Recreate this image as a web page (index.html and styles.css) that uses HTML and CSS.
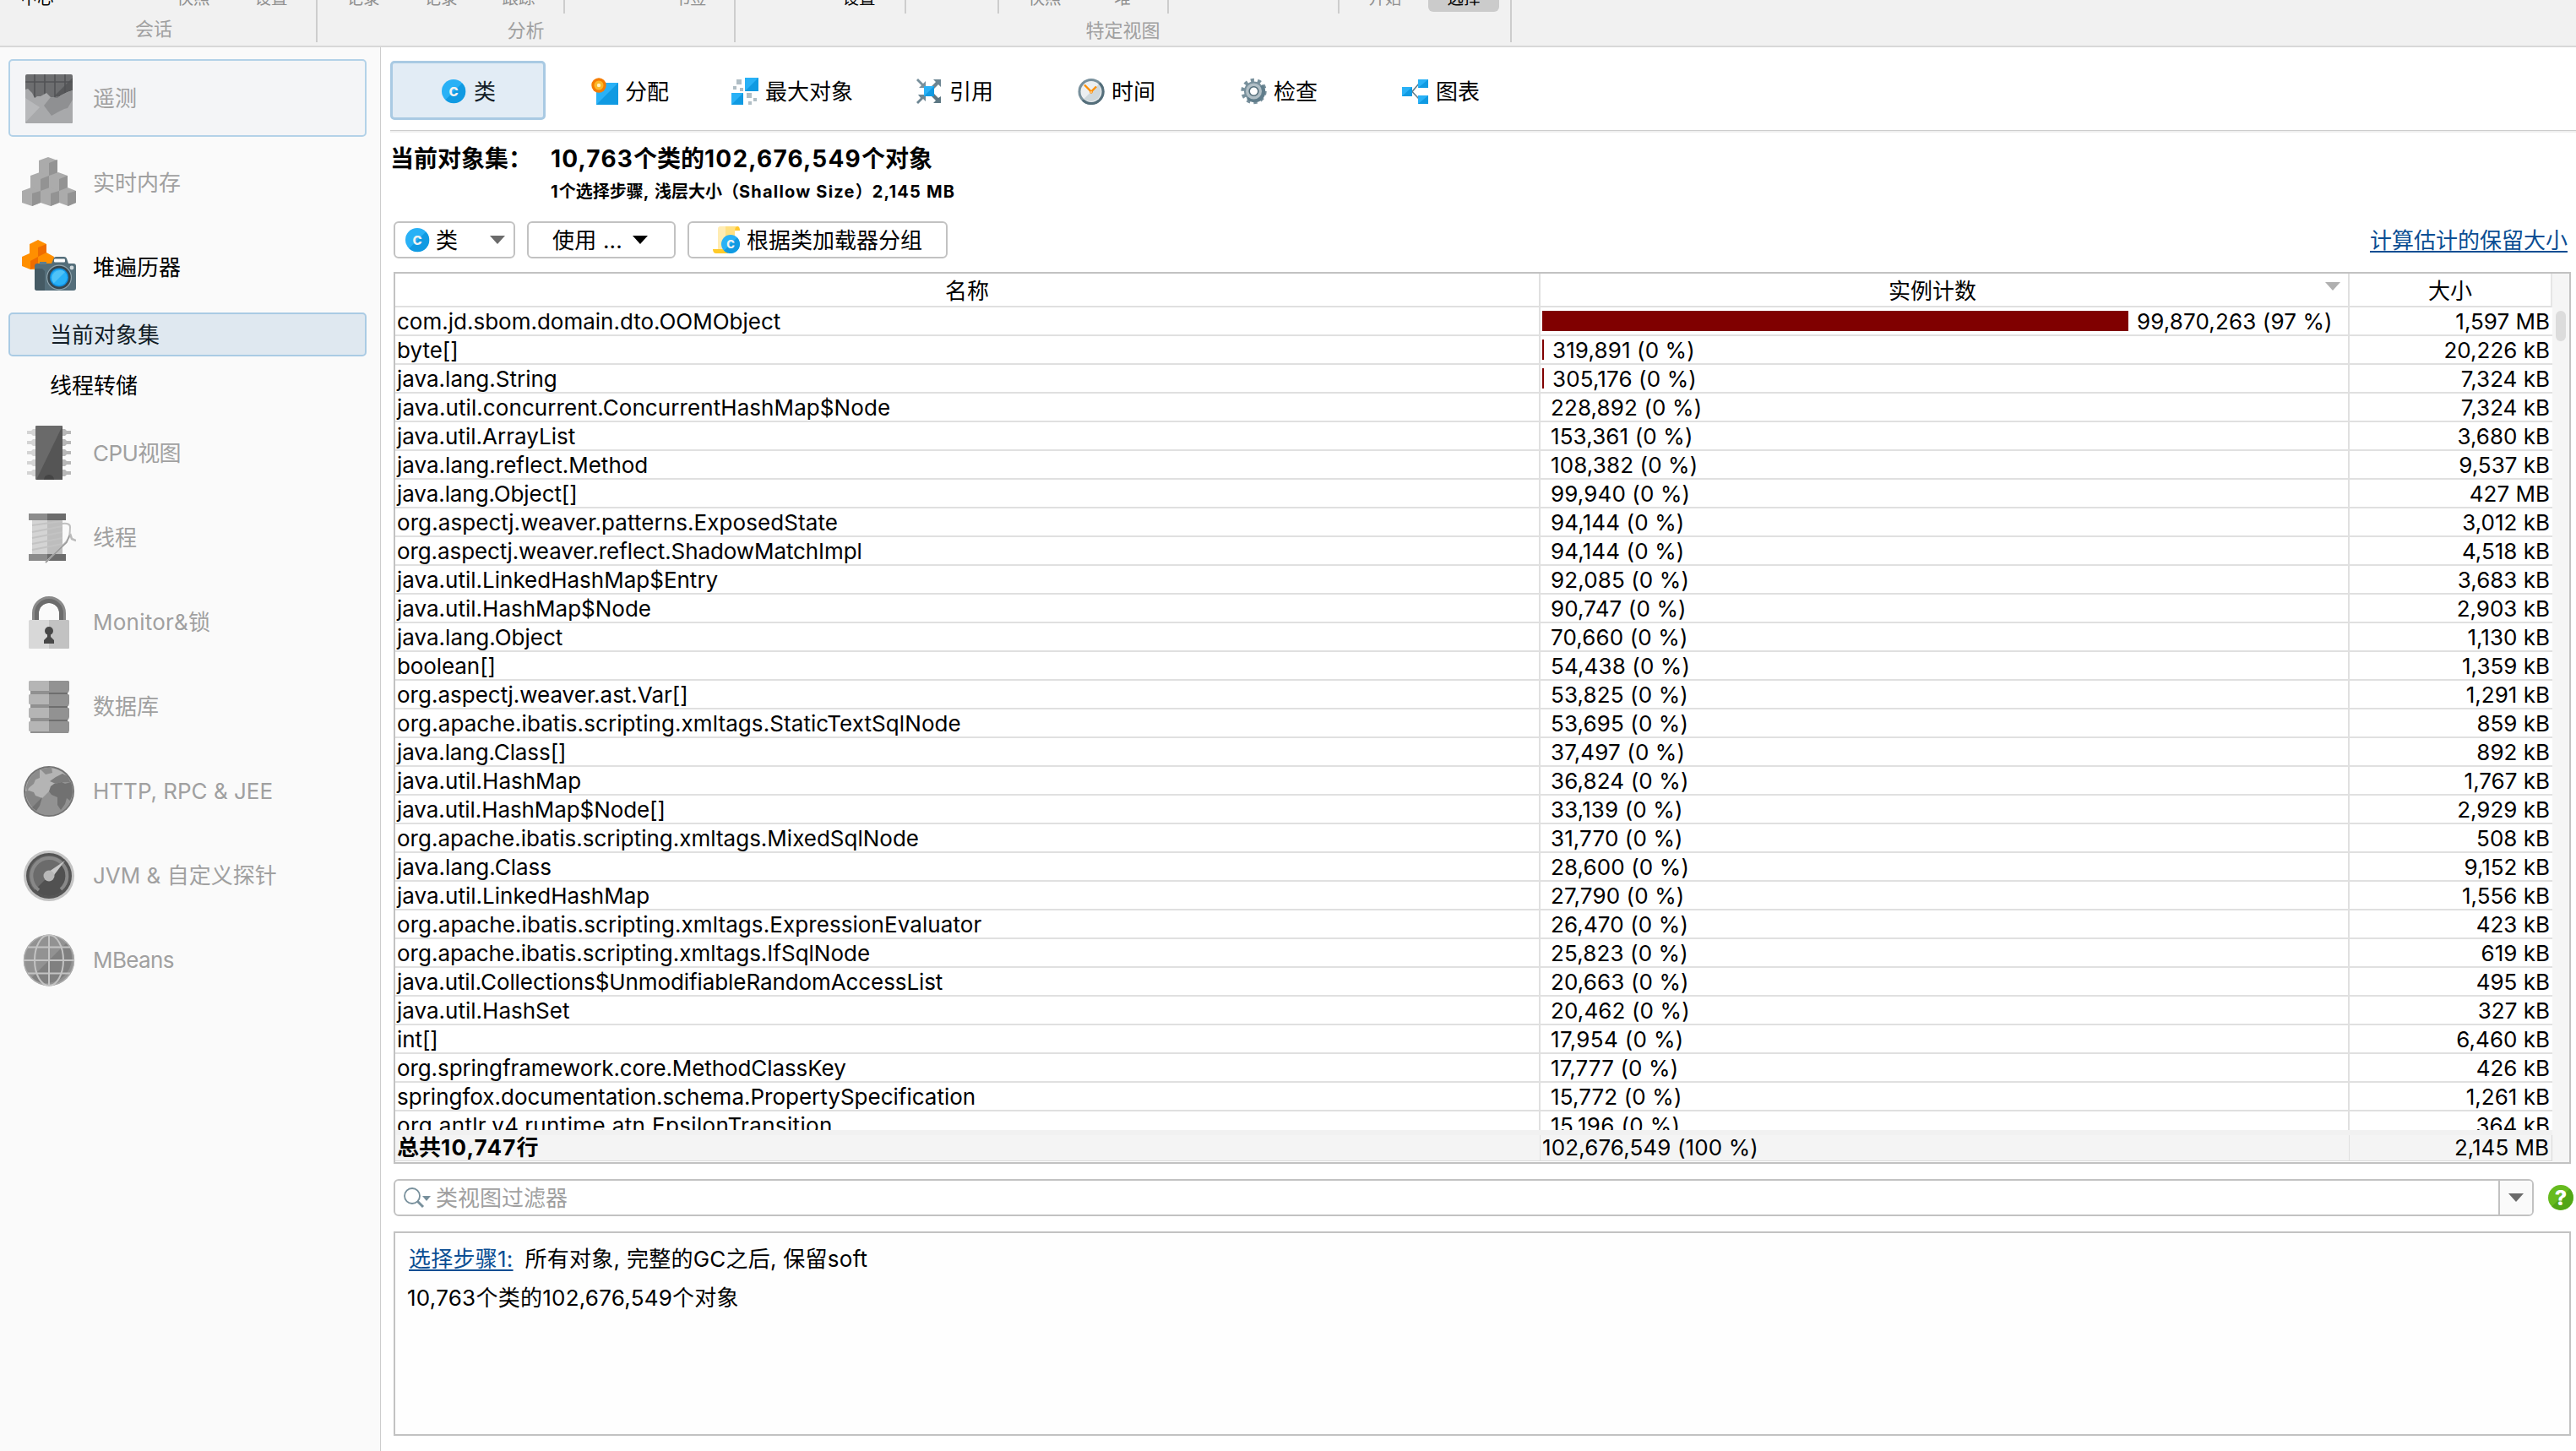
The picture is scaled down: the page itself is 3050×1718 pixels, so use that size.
FILE: index.html
```html
<!DOCTYPE html>
<html lang="zh-CN">
<head>
<meta charset="utf-8">
<title>堆遍历器</title>
<link rel="stylesheet" href="styles.css">
</head>
<body>
<svg class="defs" width="0" height="0" aria-hidden="true">
  <symbol id="i-class" viewBox="0 0 32 32">
    <circle cx="16" cy="16" r="14" fill="#29b1f6"/>
    <path d="M26.2 6.4A14 14 0 0 1 6.4 26.2Z" fill="#109ae2"/>
    <text x="16" y="21.500" text-anchor="middle" class="glyph-c">C</text>
  </symbol>
  <symbol id="i-down" viewBox="0 0 18 10"><path d="M0 0H18L9 10Z" fill="currentColor"/></symbol>
</svg>

<header class="ribbon">
  <section class="group g1">
    <div class="items">
      <span class="item on c-first">中心</span>
      <span class="item">快照</span><span class="item">设置</span>
    </div>
    <div class="caption">会话</div>
  </section>
  <section class="group g2">
    <div class="items">
      <span class="item">记录</span><span class="item">记录</span><span class="item">跟踪</span>
      <i class="sep"></i>
      <span class="item c-bookmark">书签</span>
    </div>
    <div class="caption">分析</div>
  </section>
  <section class="group g3">
    <div class="items">
      <span class="item on c-settings">设置</span>
      <i class="sep"></i><i class="sep c-wide"></i>
      <span class="item c-snap">快照</span><span class="item">堆</span>
      <i class="sep"></i><i class="sep c-wider"></i>
      <span class="item c-snap">开始</span>
      <span class="item on pressed">选择</span>
    </div>
    <div class="caption">特定视图</div>
  </section>
</header>

<div class="body">
<nav class="side">
  <a class="nav hover">
    <svg viewBox="0 0 64 64"><rect x="4" y="4" width="56" height="58" rx="2" fill="#6d6e70"/><path d="M60 8V30H38Z" fill="#57585a"/><path d="M15 4V32M27 4V32M39 4V32M51 4V32M4 13H60" stroke="#525355" stroke-width="1.6"/><path d="M4 22L7 21L12 26L15 32L18 30L22 30L29 26L34 31L42 32L46 29L54 25L60 23V60Q60 62 58 62H6Q4 62 4 60Z" fill="#a8a9ab"/><path d="M34 31L42 32L46 29L54 25L60 23V34L54 44L50 45L42 49L35 53L26 41Z" fill="#8f9092"/><path d="M4 32L21 43L4 61Z" fill="#b8b9bb"/></svg>
    <span>遥测</span></a>
  <a class="nav">
    <svg viewBox="0 0 64 64"><path d="M20 6L31 2L42 6V22L31 27L20 22Z" fill="#ababab"/><path d="M32 9L42 5V22L32 26Z" fill="#939393"/><path d="M10 24L21 20L32 24V42L21 46L10 42Z" fill="#ababab"/><path d="M22 28L32 24V42L22 46Z" fill="#939393"/><path d="M32 24L43 20L54 24V42L43 46L32 42Z" fill="#ababab"/><path d="M44 28L54 24V42L44 46Z" fill="#939393"/><path d="M0 42L11 38L22 42V56L12 60L0 56Z" fill="#ababab"/><path d="M12 45L22 42V56L12 60Z" fill="#939393"/><path d="M22 42L33 38L44 42V56L34 60L22 56Z" fill="#ababab"/><path d="M34 45L44 42V56L34 60Z" fill="#939393"/><path d="M44 42L54 38L64 42V56L55 60L44 56Z" fill="#ababab"/><path d="M54 45L64 42V56L54 60Z" fill="#939393"/></svg>
    <span>实时内存</span></a>
  <a class="nav on">
    <svg viewBox="0 0 64 64"><path d="M9 5L19 0L29 5V15L38 20V30L28 35L10 35L0 31V20L9 16Z" fill="#ff8f00"/><path d="M19 9L29 5V15L19 20ZM10 25L19 20V31L10 35Z" fill="#ef6c00"/><path d="M35 28L38 21Q39 20 41 20H50Q52 20 53 22L55 28Z" fill="#546e7a"/><rect x="38" y="22.500" width="13" height="4" rx="1" fill="#fff"/><rect x="15" y="28" width="49" height="32" rx="3" fill="#546e7a"/><path d="M15 34H24L27 37V60H18Q15 60 15 57Z" fill="#455a64"/><rect x="21" y="26" width="8" height="3" fill="#607d8b"/><circle cx="44" cy="44.500" r="15" fill="#90a4ae"/><circle cx="44" cy="44.500" r="13.800" fill="#37474f"/><circle cx="44" cy="44.500" r="11" fill="#0f8fe0"/><circle cx="44" cy="44.500" r="9.600" fill="#29b1f6"/><path d="M37.500 51.500A9.600 9.600 0 0 1 51 38Z" fill="#4fc3f7"/><circle cx="59" cy="33" r="2.400" fill="#cfd8dc"/></svg>
    <span>堆遍历器</span></a>
  <a class="sub sel">当前对象集</a>
  <a class="sub">线程转储</a>
  <a class="nav">
    <svg viewBox="0 0 64 64"><path d="M6 6H11L13 4H17V12H13L11 10H6ZM6 18H11L13 16H17V24H13L11 22H6ZM6 30H11L13 28H17V36H13L11 34H6ZM6 42H11L13 40H17V48H13L11 46H6ZM6 54H11L13 52H17V60H13L11 58H6Z" fill="#d4d4d4"/><path d="M58 6H53L51 4H47V12H51L53 10H58ZM58 18H53L51 16H47V24H51L53 22H58ZM58 30H53L51 28H47V36H51L53 34H58ZM58 42H53L51 40H47V48H51L53 46H58ZM58 54H53L51 52H47V60H51L53 58H58Z" fill="#b8b8b8"/><rect x="16" y="0" width="32" height="64" rx="1" fill="#6a6a6a"/><path d="M48 0V64H17Z" fill="#555"/><path d="M26 64A6 6 0 0 1 38 64Z" fill="#444"/></svg>
    <span class="tight">CPU视图</span></a>
  <a class="nav">
    <svg viewBox="0 0 64 64"><path d="M12 12H30V52H12Z" fill="#d4d4d4"/><path d="M30 12H48V52H30Z" fill="#bdbdbd"/><path d="M12 18L48 13M12 26L48 19M12 33L48 26M12 40L48 33M12 47L48 40" stroke="#c3c3c3" stroke-width="2"/><path d="M8 4H30V12H8ZM8 52H30V60H8Z" fill="#8c8c8c"/><path d="M30 4H52V12H30ZM30 52H52V60H30Z" fill="#6c6c6c"/><path d="M48 16Q57 15 57 20T56 32L52 38L28 62" fill="none" stroke="#c0c0c0" stroke-width="2"/><path d="M57 28L59 34L64 36" fill="none" stroke="#bbb" stroke-width="2.500"/><path d="M56 30L53 38L28 62" fill="none" stroke="#999" stroke-width="1.500"/></svg>
    <span>线程</span></a>
  <a class="nav">
    <svg viewBox="0 0 64 64"><path d="M16 32V22A16 16 0 0 1 48 22V32" fill="none" stroke="#8a8a8a" stroke-width="8"/><path d="M17.500 32V22A14.500 14.500 0 0 1 46.500 22V32" fill="none" stroke="#6c6c6c" stroke-width="5"/><rect x="8" y="30" width="48" height="34" rx="1.500" fill="#d8d8d8"/><path d="M32 30H54.500Q56 30 56 31.500V62.500Q56 64 54.500 64H32Z" fill="#c2c2c2"/><circle cx="32" cy="43" r="5" fill="#484848"/><path d="M30 44H34V50L38 54V58H26V54L30 50Z" fill="#484848"/></svg>
    <span class="wide">Monitor&amp;锁</span></a>
  <a class="nav">
    <svg viewBox="0 0 64 64"><path d="M10 4H32V62H10Z" fill="#8f8f8f"/><path d="M32 4H54V62H32Z" fill="#6e6e6e"/><path d="M9 2H32V14H9L8 13V3ZM9 18H32V30H9L8 29V19ZM9 34H32V46H9L8 45V35ZM9 50H32V62H9L8 61V51Z" fill="#b5b5b5"/><path d="M32 2H55L56 3V13L55 16H32ZM32 18H55L56 19V29L55 32H32ZM32 34H55L56 35V45L55 48H32ZM32 50H55L56 51V61L55 64H32Z" fill="#929292"/><path d="M10 14H32V18H10ZM10 30H32V34H10ZM10 46H32V50H10ZM10 62H54V64H10Z" fill="#909090"/><path d="M32 16H54V18H32ZM32 32H54V34H32ZM32 48H54V50H32Z" fill="#6e6e6e"/></svg>
    <span>数据库</span></a>
  <a class="nav">
    <svg viewBox="0 0 64 64"><circle cx="32" cy="33" r="30" fill="#747474"/><circle cx="32" cy="33" r="28" fill="#b4b4b4"/><path d="M52 13A28 28 0 0 1 12 53Z" fill="#929292"/><path d="M5 28Q9 12 21 7V17L16 19L14 24L8 29L6 35Z" fill="#8c8c8c"/><path d="M4 33L8 32L14 34L16 38L24 41L21 46L14 54Q5 45 4 33Z" fill="#858585"/><path d="M24 40L12 52L17 56L21 50Z" fill="#717171"/><path d="M34 27L38 24L47 22L51 24L58 22Q62 35 57 44L53 41L51 48L46 55L42 49V40L35 37L32 33Z" fill="#717171"/><path d="M33 21L40 16L48 12L54 15L57 22L47 22L40 24Z" fill="#7c7c7c"/><path d="M22 7L35 4L36 11L28 13Z" fill="#8c8c8c"/></svg>
    <span>HTTP, RPC &amp; JEE</span></a>
  <a class="nav">
    <svg viewBox="0 0 64 64"><circle cx="32" cy="33" r="30" fill="#c4c4c4"/><circle cx="32" cy="33" r="27" fill="#555"/><circle cx="32" cy="33" r="24" fill="#6b6b6b"/><path d="M49 16A24 24 0 0 1 15 50Z" fill="#515151"/><path d="M20 50A21 21 0 1 1 46 49" fill="none" stroke="#888" stroke-width="4"/><path d="M35 36L29 30L51 15Z" fill="#c8c8c8"/><circle cx="32" cy="33" r="6.500" fill="#b8b8b8"/></svg>
    <span>JVM &amp; 自定义探针</span></a>
  <a class="nav">
    <svg viewBox="0 0 64 64"><circle cx="32" cy="33" r="30" fill="#929292"/><path d="M53 12A30 30 0 0 1 11 54Z" fill="#808080"/><g fill="none" stroke="#c3c3c3" stroke-width="2"><circle cx="32" cy="33" r="29.500" stroke="#aaa" stroke-width="1.500"/><path d="M2 33H62M32 3V63M7 17.500H57M7 48.500H57"/><ellipse cx="32" cy="33" rx="17" ry="30"/></g></svg>
    <span class="tight">MBeans</span></a>
</nav>

<main class="main">
  <div class="tabs">
    <a class="tab active"><svg viewBox="0 0 32 32"><use href="#i-class"/></svg><span>类</span></a>
    <a class="tab"><svg viewBox="0 0 32 32"><path d="M6 6H32V32H6Z" fill="#29b1f6"/><path d="M32 6V32H6Z" fill="#109ae2"/><circle cx="9" cy="9" r="8.700" fill="#f57c00"/><circle cx="9" cy="9" r="5.500" fill="#fbb829"/><circle cx="9" cy="9" r="2.200" fill="#fff3c4"/></svg><span>分配</span></a>
    <a class="tab"><svg viewBox="0 0 32 32"><path d="M16 0H32V16H16ZM0 18H14V32H0Z" fill="#29b1f6"/><path d="M32 0V16H16ZM14 18V32H0Z" fill="#109ae2"/><path d="M6 2H12V8H6ZM2 10H6V14H2ZM10 12H14V16H10ZM18 18H24V24H18ZM26 24H30V28H26ZM20 28H24V32H20Z" fill="#b0bec5"/></svg><span>最大对象</span></a>
    <a class="tab"><svg viewBox="0 0 32 32"><path d="M1 3L3 1L9 7L12 4V12H4L7 9Z" fill="#78909c"/><path d="M21 2H30V11L27 8L22 13L19 10L24 5Z" fill="#6c8592"/><path d="M3 31L1 29L6 24L3 20H12V28L9 25Z" fill="#6c8592"/><path d="M30 22V30H21L24 27L19 22L22 19L27 24Z" fill="#5c7783"/><path d="M10 10H22V22H10Z" fill="#29b1f6"/><path d="M22 10V22H10Z" fill="#109ae2"/></svg><span>引用</span></a>
    <a class="tab"><svg viewBox="0 0 32 32"><circle cx="16" cy="16.500" r="15.500" fill="#78909c"/><path d="M27 5.500A15.500 15.500 0 0 1 5 27.500Z" fill="#546e7a"/><circle cx="16" cy="16.500" r="12.500" fill="#eceff1"/><path d="M24.800 7.700A12.500 12.500 0 0 1 7.200 25.300Z" fill="#cfd8dc"/><path d="M8 8.500L16 16.500L22 10.500" fill="none" stroke="#ff8f00" stroke-width="2.400"/><circle cx="16" cy="17" r="1.800" fill="#ff8f00"/><circle cx="16" cy="17" r=".8" fill="#fff"/></svg><span>时间</span></a>
    <a class="tab"><svg viewBox="0 0 32 32"><circle cx="16.500" cy="16" r="12.700" fill="none" stroke="#78909c" stroke-width="5" stroke-dasharray="4 3.980"/><circle cx="16.500" cy="16" r="11.500" fill="#78909c"/><path d="M27 8A12 12 0 0 1 8 25Z" fill="#607d8b"/><circle cx="16.500" cy="16" r="7.500" fill="none" stroke="#b0bec5" stroke-width="4"/><circle cx="16.500" cy="16" r="5.300" fill="#fff" stroke="#546e7a" stroke-width="1.600"/></svg><span>检查</span></a>
    <a class="tab"><svg viewBox="0 0 32 32"><path d="M20 7L12 16.500L20 25" fill="none" stroke="#607d8b" stroke-width="1.600"/><path d="M0 11H12V22H0ZM19 2H31V12H19ZM19 21H31V31H19Z" fill="#29b1f6"/><path d="M12 11V22H0ZM31 2V12H19ZM31 21V31H19Z" fill="#109ae2"/></svg><span>图表</span></a>
  </div>

  <dl class="summary">
    <dt>当前对象集：</dt>
    <dd>
      <div class="s1"><span class="lt">10,763</span>个类的<span class="lt">102,676,549</span>个对象</div>
      <div class="s2"><span class="lt">1</span>个选择步骤<span class="lt">, </span>浅层大小（<span class="lt">Shallow Size</span>）<span class="lt">2,145 MB</span></div>
    </dd>
  </dl>

  <div class="toolbar">
    <button class="btn combo"><svg class="ic" viewBox="0 0 32 32"><use href="#i-class"/></svg><span>类</span><svg class="dn"><use href="#i-down"/></svg></button>
    <button class="btn use"><span>使用 ...</span><svg class="dn"><use href="#i-down"/></svg></button>
    <button class="btn group-by"><svg class="ic" viewBox="0 0 32 32"><path d="M6 3Q6 0 9 0H30Q26 1 26 5V29H6Z" fill="#ffecb3"/><path d="M15 0H30Q26 1 26 5V16H15Z" fill="#ffe082"/><path d="M26 5Q26 0 30 0Q32 1 32 5Z" fill="#ffc629"/><path d="M0 27H18V32H4Q0 32 0 27Z" fill="#ffca28"/><circle cx="21" cy="21" r="11" fill="#29b1f6"/><path d="M28.800 13.200A11 11 0 0 1 13.200 28.800Z" fill="#109ae2"/><text x="21" y="25.800" text-anchor="middle" class="glyph-c small">C</text></svg><span>根据类加载器分组</span></button>
    <a class="link">计算估计的保留大小</a>
  </div>

  <div class="table">
    <div class="grid">
      <div class="tr th"><span>名称</span><span>实例计数<svg class="dn sort"><use href="#i-down"/></svg></span><span>大小</span></div>
      <div class="rows">
        <div class="tr"><span>com.jd.sbom.domain.dto.OOMObject</span><span><i class="bar" style="width:694px"></i>99,870,263 (97 %)</span><span>1,597 MB</span></div>
        <div class="tr"><span>byte[]</span><span><i class="bar" style="width:2px"></i>319,891 (0 %)</span><span>20,226 kB</span></div>
        <div class="tr"><span>java.lang.String</span><span><i class="bar" style="width:2px"></i>305,176 (0 %)</span><span>7,324 kB</span></div>
        <div class="tr"><span class="ls-1">java.util.concurrent.ConcurrentHashMap$Node</span><span><i class="bar"></i>228,892 (0 %)</span><span>7,324 kB</span></div>
        <div class="tr"><span>java.util.ArrayList</span><span><i class="bar"></i>153,361 (0 %)</span><span>3,680 kB</span></div>
        <div class="tr"><span>java.lang.reflect.Method</span><span><i class="bar"></i>108,382 (0 %)</span><span>9,537 kB</span></div>
        <div class="tr"><span class="ls-n">java.lang.Object[]</span><span><i class="bar"></i>99,940 (0 %)</span><span>427 MB</span></div>
        <div class="tr"><span class="ls-1">org.aspectj.weaver.patterns.ExposedState</span><span><i class="bar"></i>94,144 (0 %)</span><span>3,012 kB</span></div>
        <div class="tr"><span class="ls-n">org.aspectj.weaver.reflect.ShadowMatchImpl</span><span><i class="bar"></i>94,144 (0 %)</span><span>4,518 kB</span></div>
        <div class="tr"><span>java.util.LinkedHashMap$Entry</span><span><i class="bar"></i>92,085 (0 %)</span><span>3,683 kB</span></div>
        <div class="tr"><span>java.util.HashMap$Node</span><span><i class="bar"></i>90,747 (0 %)</span><span>2,903 kB</span></div>
        <div class="tr"><span>java.lang.Object</span><span><i class="bar"></i>70,660 (0 %)</span><span>1,130 kB</span></div>
        <div class="tr"><span class="ls-n">boolean[]</span><span><i class="bar"></i>54,438 (0 %)</span><span>1,359 kB</span></div>
        <div class="tr"><span>org.aspectj.weaver.ast.Var[]</span><span><i class="bar"></i>53,825 (0 %)</span><span>1,291 kB</span></div>
        <div class="tr"><span class="ls-1">org.apache.ibatis.scripting.xmltags.StaticTextSqlNode</span><span><i class="bar"></i>53,695 (0 %)</span><span>859 kB</span></div>
        <div class="tr"><span class="ls-n">java.lang.Class[]</span><span><i class="bar"></i>37,497 (0 %)</span><span>892 kB</span></div>
        <div class="tr"><span>java.util.HashMap</span><span><i class="bar"></i>36,824 (0 %)</span><span>1,767 kB</span></div>
        <div class="tr"><span class="ls-n">java.util.HashMap$Node[]</span><span><i class="bar"></i>33,139 (0 %)</span><span>2,929 kB</span></div>
        <div class="tr"><span>org.apache.ibatis.scripting.xmltags.MixedSqlNode</span><span><i class="bar"></i>31,770 (0 %)</span><span>508 kB</span></div>
        <div class="tr"><span>java.lang.Class</span><span><i class="bar"></i>28,600 (0 %)</span><span>9,152 kB</span></div>
        <div class="tr"><span>java.util.LinkedHashMap</span><span><i class="bar"></i>27,790 (0 %)</span><span>1,556 kB</span></div>
        <div class="tr"><span class="ls-1">org.apache.ibatis.scripting.xmltags.ExpressionEvaluator</span><span><i class="bar"></i>26,470 (0 %)</span><span>423 kB</span></div>
        <div class="tr"><span>org.apache.ibatis.scripting.xmltags.IfSqlNode</span><span><i class="bar"></i>25,823 (0 %)</span><span>619 kB</span></div>
        <div class="tr"><span class="ls-n">java.util.Collections$UnmodifiableRandomAccessList</span><span><i class="bar"></i>20,663 (0 %)</span><span>495 kB</span></div>
        <div class="tr"><span>java.util.HashSet</span><span><i class="bar"></i>20,462 (0 %)</span><span>327 kB</span></div>
        <div class="tr"><span class="ls-n">int[]</span><span class="ls-3"><i class="bar"></i>17,954 (0 %)</span><span>6,460 kB</span></div>
        <div class="tr"><span class="ls-n">org.springframework.core.MethodClassKey</span><span><i class="bar"></i>17,777 (0 %)</span><span>426 kB</span></div>
        <div class="tr"><span>springfox.documentation.schema.PropertySpecification</span><span><i class="bar"></i>15,772 (0 %)</span><span>1,261 kB</span></div>
        <div class="tr"><span class="ls-3">org.antlr.v4.runtime.atn.EpsilonTransition</span><span class="ls-3"><i class="bar"></i>15,196 (0 %)</span><span>364 kB</span></div>
      </div>
      <div class="tr total"><span>总共<span class="lt">10,747</span>行</span><span>102,676,549 (100 %)</span><span>2,145 MB</span></div>
    </div>
    <div class="scroll"><i class="thumb"></i></div>
  </div>

  <div class="filter">
    <div class="field">
      <svg class="mag" viewBox="0 0 32 26"><circle cx="10" cy="11" r="9" fill="none" stroke="#78909c" stroke-width="1.800"/><path d="M16 17L23 24" stroke="#78909c" stroke-width="3"/><path d="M22 11H32L27 17Z" fill="#78909c"/></svg>
      <span class="ph">类视图过滤器</span>
      <span class="open"><svg class="dn"><use href="#i-down"/></svg></span>
    </div>
    <svg class="help" viewBox="0 0 30 30"><circle cx="15" cy="15" r="15" fill="#66bb1e"/><path d="M25.600 4.400A15 15 0 0 1 4.400 25.600Z" fill="#51a616"/><text x="15" y="24" text-anchor="middle" class="glyph-q">?</text></svg>
  </div>

  <div class="steps">
    <p><a class="link">选择步骤1:</a><span class="desc">所有对象, 完整的GC之后, 保留soft</span></p>
    <p class="res">10,763个类的102,676,549个对象</p>
  </div>
</main>
</div>
</body>
</html>
```
FILE: styles.css
```css
* { box-sizing: border-box; }
body { margin: 0; width: 3050px; height: 1718px; overflow: hidden; display: flex; flex-direction: column; background: #fff; color: #000; font: 26px/32px Inter, "Noto Sans CJK SC", sans-serif; }
svg { display: block; flex: none; }
.defs { position: absolute; }
i { display: block; font-style: normal; flex: none; }
p, dl, dd { margin: 0; }
a { color: inherit; }

/* ribbon: the button captions run off the top edge of the window */
.ribbon { flex: none; height: 56px; display: flex; background: #f1f1f1; border-bottom: 2px solid #d8d8d8; }
.group { display: flex; flex-direction: column; height: 50px; border-right: 2px solid #cdcdcd; }
.g1 { width: 376px; }
.g2 { width: 495px; padding-left: 8px; }
.g3 { width: 919px; }
.items { display: flex; height: 16px; }
.item { display: block; flex: none; width: 92px; height: 28px; margin-top: -14px; text-align: center; font-size: 19.5px; line-height: 24px; color: #8f8f8f; }
.item.on { color: #000; }
.item.c-first { width: 88px; margin-right: 95px; }
.item.c-bookmark { margin-left: 102px; }
.item.c-settings { margin-left: 100px; margin-right: 1px; }
.item.c-snap { margin-left: 8px; }
.item.pressed { width: 84px; margin-left: 5px; background: #cbcbcb; border-radius: 6px; }
.sep { width: 2px; height: 16px; margin-left: 7px; background: #cdcdcd; }
.sep.c-wide { margin-left: 108px; }
.sep.c-wider { margin-left: 200px; }
.caption { font-size: 22px; line-height: 40px; text-align: center; color: #a0a0a0; }
.g1 .caption { margin-left: -10px; }
.g2 .caption { margin-left: -8px; }

.body { flex: 1; display: flex; min-height: 0; }
.side { flex: none; width: 451px; padding: 14px 16px 0 10px; display: flex; flex-direction: column; gap: 8px; background: #fafafa; border-right: 1px solid #cdcdcd; }
.nav { height: 92px; padding-left: 16px; display: flex; align-items: center; gap: 20px; color: #a0a0a0; }
.nav svg { width: 64px; height: 64px; }
.nav span { padding-top: 2px; }
.nav.on { color: #000; }
.nav.hover { padding-left: 14px; border: 2px solid #b3d2e8; border-radius: 5px; background: #f4f5f7; }
.tight { letter-spacing: -.6px; }
.wide { letter-spacing: .25px; }
.sub { height: 52px; padding-left: 49px; line-height: 54px; }
.sub.sel { padding-left: 47px; line-height: 50px; border: 2px solid #aacbe4; border-radius: 5px; background: #dfe8f0; color: #111c26; }

.main { flex: 1; min-width: 0; padding-left: 11px; display: flex; flex-direction: column; }
.tabs { display: flex; gap: 8px; height: 99px; padding-top: 16px; border-bottom: 1px solid #cdcdcd; box-shadow: 0 2px #f0f0f0; }
.tab { width: 184px; height: 70px; padding-top: 1px; display: flex; align-items: center; justify-content: center; gap: 8px; }
.tab svg { width: 32px; height: 32px; }
.tab span { padding-top: 3px; }
.tab.active { border: 3px solid #a9cae3; border-radius: 5px; background: #e2ecf5; color: #111c26; }
.glyph-c { font: 800 15px Inter, sans-serif; fill: #f2f2f2; }
.glyph-c.small { font-size: 13px; }
.glyph-q { font: 800 25px Inter, sans-serif; fill: #fff; }

.summary { display: flex; margin: 13px 0 17px 0; height: 77px; font-weight: 700; }
.summary dt { width: 190px; font-size: 28px; line-height: 40px; white-space: nowrap; }
.s1 { font-size: 28px; line-height: 40px; }
.s2 { font-size: 20px; line-height: 38px; white-space: pre; }
.lt { letter-spacing: 1.2px; }

.toolbar { display: flex; height: 44px; margin: 0 10px 16px 4px; gap: 14px; align-items: center; }
.btn { margin: 0; height: 44px; padding: 0; display: flex; align-items: center; font: inherit; color: #000; background: #fff; border: 2px solid #c2c2c2; border-radius: 6px; }
.btn span { padding-top: 2px; }
.ic { width: 32px; height: 32px; }
.dn { width: 18px; height: 10px; }
.combo { width: 144px; padding: 0 10px; }
.combo span { margin-left: 6px; }
.combo .dn { margin-left: auto; color: #6b6b6b; }
.use { width: 176px; padding-left: 28px; }
.use span { letter-spacing: .2px; }
.use .dn { margin-left: 12px; }
.group-by { width: 308px; padding-left: 28px; gap: 8px; }
.link { color: #0b4e93; text-decoration: underline; text-decoration-thickness: 2px; text-underline-offset: 3px; }
.toolbar .link { margin-left: auto; padding-top: 2px; }

.table { display: flex; height: 1056px; margin: 0 6px 18px 4px; border: 2px solid #c2c2c2; }
.grid { width: 2554px; display: flex; flex-direction: column; }
.tr { display: grid; grid-template-columns: 1356px 958px 240px; height: 34px; flex: none; }
.tr > span { display: flex; align-items: center; white-space: pre; line-height: 30px; padding-top: 2px; border-right: 2px solid #e0e0e0; border-bottom: 2px solid #e0e0e0; }
.tr > span:first-child { padding-left: 2px; }
.tr > span:nth-child(2) { padding-left: 2px; letter-spacing: .12px; }
.tr > span:last-child { justify-content: flex-end; padding-right: 3px; border-right: 0; }
.tr > span.ls-n { letter-spacing: -.09px; }
.tr > span.ls-1 { letter-spacing: .08px; }
.tr > span.ls-3 { letter-spacing: .34px; }
.tr.th { height: 40px; }
.tr.th > span { justify-content: center; padding: 4px 0 0; position: relative; letter-spacing: 0; }
.tr.th > span:nth-child(2) { padding-right: 28px; }
.tr.th > span:last-child { border-right: 2px solid #e6e6e6; }
.sort { position: absolute; right: 9px; top: 10px; color: #b0b0b0; }
.rows { height: 974px; overflow: hidden; }
.bar { height: 24px; margin: -2px 10px 0 0; background: #800000; }
.total { margin-top: 6px; height: 31px; background: #f4f4f4; box-shadow: 0 -6px #f1f1f1; }
.total > span { padding-top: 0; border-right-width: 1px; border-bottom: 1px solid #d8d8d8; line-height: 30px; }
.total > span:last-child { border-right: 1px solid #d8d8d8; }
.total > span:first-child { font-weight: 700; }
.scroll { flex: 1; background: #f5f5f5; padding: 44px 4px 0; }
.thumb { width: 12px; height: 36px; border-radius: 6px; background: #dcdcdc; }

.filter { display: flex; align-items: center; height: 44px; margin: 0 3px 18px 4px; justify-content: space-between; }
.field { width: 2534px; height: 44px; display: flex; align-items: center; border: 2px solid #c2c2c2; border-radius: 6px; padding-left: 10px; overflow: hidden; }
.mag { width: 32px; height: 26px; }
.ph { margin-left: 6px; padding-top: 2px; color: #a0a0a0; }
.open { margin-left: auto; width: 40px; height: 40px; display: flex; align-items: center; justify-content: center; border-left: 2px solid #c2c2c2; background: #fafafa; color: #6b6b6b; }
.help { width: 30px; height: 30px; }

.steps { height: 242px; margin: 0 6px 0 4px; padding: 15px 16px; border: 2px solid #c2c2c2; background: #fefefe; }
.steps p { margin-bottom: 14px; letter-spacing: .25px; }
.steps .res { margin-left: -2px; }
.desc { margin-left: 14px; }
```
